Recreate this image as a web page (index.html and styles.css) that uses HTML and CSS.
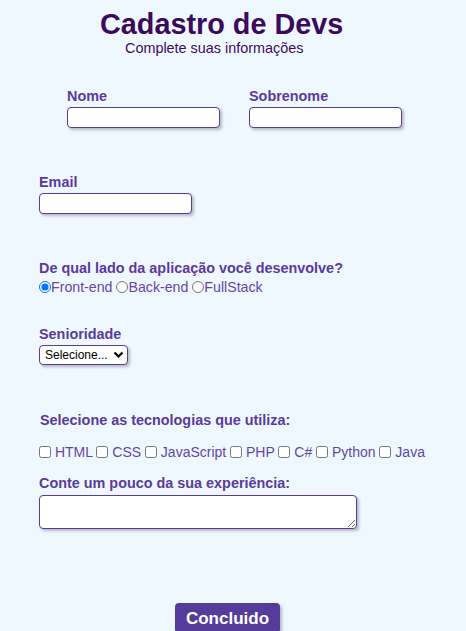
FILE: index.html
```html
<!DOCTYPE html>
<html lang="pt-BR">
<head>
<meta charset="utf-8">
<title>Cadastro de Devs</title>
<link rel="stylesheet" href="styles.css">
</head>
<body>
<header class="head">
  <h1 class="title">Cadastro de Devs</h1>
  <p class="subtitle">Complete suas informações</p>
</header>
<form class="form">
  <div class="names">
    <div class="field">
      <label class="label" for="nome">Nome</label>
      <input class="text-input" id="nome" type="text">
    </div>
    <div class="field">
      <label class="label" for="sobrenome">Sobrenome</label>
      <input class="text-input" id="sobrenome" type="text">
    </div>
  </div>
  <div class="field email">
    <label class="label" for="email">Email</label>
    <input class="text-input" id="email" type="email">
  </div>
  <div class="field side">
    <p class="label">De qual lado da aplicação você desenvolve?</p>
    <div class="radios"><label class="opt"><input class="radio" type="radio" name="lado" checked>Front-end</label> <label class="opt"><input class="radio" type="radio" name="lado">Back-end</label> <label class="opt"><input class="radio" type="radio" name="lado">FullStack</label></div>
  </div>
  <div class="field senior">
    <label class="label" for="senioridade">Senioridade</label>
    <div class="select-wrap">
      <select class="select" id="senioridade">
        <option>Selecione...</option>
        <option>Júnior</option>
        <option>Pleno</option>
        <option>Sênior</option>
      </select>
      <svg class="chevron" width="11" height="8" viewBox="0 0 11 8" aria-hidden="true"><path d="M1.5 1.5 L5.5 5.5 L9.5 1.5" fill="none" stroke="#000" stroke-width="2.2"/></svg>
    </div>
  </div>
  <div class="field techs">
    <p class="label">Selecione as tecnologias que utiliza:</p>
    <div class="checks"><label class="opt"><input class="check" type="checkbox"> HTML</label> <label class="opt"><input class="check" type="checkbox"> CSS</label> <label class="opt"><input class="check" type="checkbox"> JavaScript</label> <label class="opt"><input class="check" type="checkbox"> PHP</label> <label class="opt"><input class="check" type="checkbox"> C#</label> <label class="opt"><input class="check" type="checkbox"> Python</label> <label class="opt"><input class="check" type="checkbox"> Java</label></div>
  </div>
  <div class="field exp">
    <label class="label" for="exp">Conte um pouco da sua experiência:</label>
    <textarea class="area" id="exp"></textarea>
  </div>
  <div class="actions">
    <button class="button" type="submit">Concluido</button>
  </div>
</form>
</body>
</html>
```
FILE: styles.css
```css
html, body {
  margin: 0;
  padding: 0;
  background: #f0f8ff;
}
body {
  padding-top: 8px;
  font-family: "Liberation Sans", Arial, sans-serif;
  height: 623px;
  overflow: hidden;
}
.head {
  margin: 0;
}
.title {
  margin: 0 0 0 100px;
  font-size: 28.8px;
  line-height: 33px;
  font-weight: bold;
  color: #3b0a5e;
}
.subtitle {
  margin: -1px 0 0 125px;
  font-size: 14.4px;
  line-height: 17px;
  color: #3b0a5e;
}
.form {
  padding-left: 39px;
  margin: 0;
}
.names {
  display: flex;
  gap: 29px;
  padding-left: 28px;
  margin-top: 31px;
}
.field {
  display: flex;
  flex-direction: column;
  align-items: flex-start;
}
.label {
  margin: 0 0 3px 0;
  font-size: 14.4px;
  line-height: 16px;
  font-weight: bold;
  color: #5a3b9c;
}
.text-input {
  box-sizing: border-box;
  width: 153px;
  height: 21px;
  margin: 0;
  border: 1px solid #5a3b9c;
  border-radius: 4px;
  background: #fff;
  box-shadow: 2px 2px 3px rgba(0, 0, 0, 0.25);
  padding: 1px 3px;
}
.email {
  margin-top: 46px;
}
.side {
  margin-top: 46px;
}
.radios, .checks {
  font-size: 14px;
  line-height: 16px;
  color: #6446a6;
  white-space: nowrap;
}
.radios {
  font-size: 14.2px;
}
.radio {
  width: 12px;
  height: 12px;
  margin: 0;
  vertical-align: -1px;
}
.check {
  width: 12px;
  height: 12px;
  margin: 0;
  vertical-align: -1px;
}
.senior {
  margin-top: 31px;
}
.select-wrap {
  position: relative;
  display: inline-block;
}
.select {
  appearance: none;
  -webkit-appearance: none;
  box-sizing: border-box;
  width: 89px;
  height: 20px;
  margin: 0;
  padding: 0 0 0 5px;
  border: 1px solid #5a3b9c;
  border-radius: 4px;
  background: #fff;
  box-shadow: 2px 2px 3px rgba(0, 0, 0, 0.25);
  font-family: "Liberation Sans", Arial, sans-serif;
  font-size: 12px;
  color: #000;
}
.chevron {
  position: absolute;
  left: 74px;
  top: 6px;
  pointer-events: none;
}
.techs {
  margin-top: 47px;
}
.techs .label {
  margin-bottom: 16px;
  padding-left: 1px;
}
.exp {
  margin-top: 15px;
}
.exp .label {
  margin-bottom: 4px;
}
.area {
  box-sizing: border-box;
  width: 318px;
  height: 34px;
  margin: 0;
  border: 1px solid #5a3b9c;
  border-radius: 4px;
  background: #fff;
  box-shadow: 2px 2px 3px rgba(0, 0, 0, 0.25);
}
.actions {
  margin-top: 74px;
  padding-left: 136px;
}
.button {
  box-sizing: border-box;
  width: 105px;
  height: 30px;
  margin: 0;
  padding: 0;
  display: block;
  border: none;
  border-radius: 4px;
  background: #553c9a;
  color: #fff;
  font-family: "Liberation Sans", Arial, sans-serif;
  font-size: 17px;
  line-height: 19px;
  font-weight: bold;
  text-align: center;
  box-shadow: 2px 2px 3px rgba(0, 0, 0, 0.25);
}
```
